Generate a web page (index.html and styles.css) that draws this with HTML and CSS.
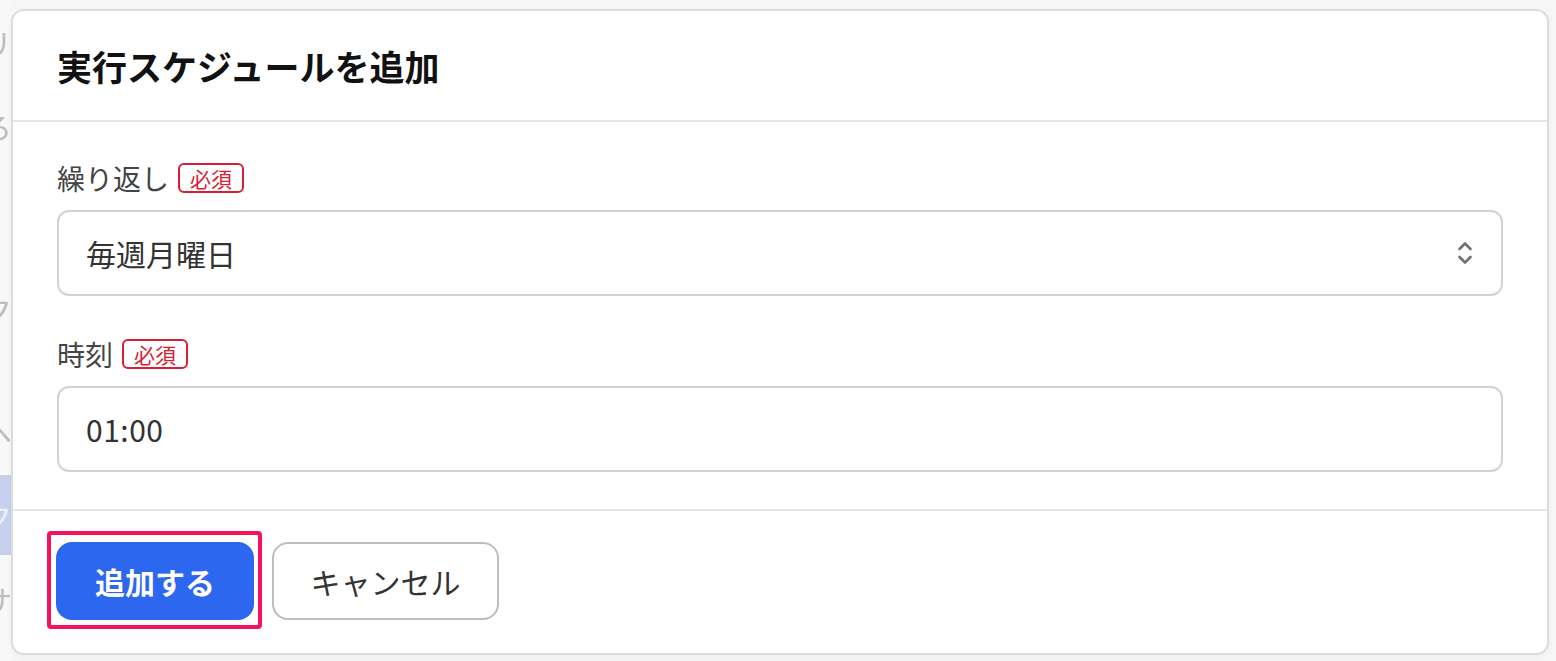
FILE: index.html
```html
<!DOCTYPE html>
<html lang="ja">
<head>
<meta charset="utf-8">
<title>実行スケジュールを追加</title>
<link rel="stylesheet" href="styles.css">
</head>
<body>
<div class="page">
  <aside class="behind">
    <div class="behind-item i1">リ</div>
    <div class="behind-item i2">ろ</div>
    <div class="behind-item i3">c</div>
    <div class="behind-item i4">ク</div>
    <div class="behind-item i5">ヘ</div>
    <div class="behind-item i6 active">ク</div>
    <div class="behind-item i7">サ</div>
  </aside>
  <div class="modal">
    <header class="modal-header">
      <h1 class="modal-title">実行スケジュールを追加</h1>
    </header>
    <div class="modal-body">
      <div class="field">
        <div class="label-row"><span class="label">繰り返し</span><span class="badge">必須</span></div>
        <div class="select">
          <span class="select-value">毎週月曜日</span>
          <svg class="chevrons" width="16" height="26" viewBox="0 0 16 26" aria-hidden="true">
            <path d="M2.5 9 L8 3.5 L13.5 9" fill="none" stroke="#707070" stroke-width="2.6" stroke-linecap="round" stroke-linejoin="round"/>
            <path d="M2.5 17 L8 22.5 L13.5 17" fill="none" stroke="#707070" stroke-width="2.6" stroke-linecap="round" stroke-linejoin="round"/>
          </svg>
        </div>
      </div>
      <div class="field">
        <div class="label-row"><span class="label">時刻</span><span class="badge">必須</span></div>
        <div class="input"><span class="input-value">01:00</span></div>
      </div>
    </div>
    <footer class="modal-footer">
      <button class="btn btn-primary highlighted">追加する</button>
      <button class="btn btn-secondary">キャンセル</button>
    </footer>
  </div>
</div>
</body>
</html>
```

FILE: styles.css
```css
* { box-sizing: border-box; }

html, body {
  margin: 0;
  padding: 0;
  height: 661px;
  overflow: hidden;
}

body {
  background: #f6f6f6;
  font-family: "Noto Sans CJK JP", "Noto Sans", sans-serif;
  color: #333;
}

.page {
  display: flex;
  height: 661px;
}

.behind {
  width: 11px;
  flex: none;
  overflow: hidden;
  display: flex;
  flex-direction: column;
  background: #f8f8f8;
}

.behind-item {
  font-size: 30px;
  line-height: 40px;
  color: #bdbdbd;
  white-space: nowrap;
  text-indent: -18px;
  height: 40px;
}

.behind-item.i1 { margin-top: 22px; }
.behind-item.i2 { margin-top: 44px; }
.behind-item.i3 { margin-top: 54px; }
.behind-item.i4 { margin-top: 48px; }
.behind-item.i5 { margin-top: 82px; }
.behind-item.i6 {
  margin-top: 25px;
  height: 80px;
  line-height: 80px;
  background: #c7d1ef;
  color: #eef1fb;
}
.behind-item.i7 { margin-top: 24px; }

.modal {
  flex: none;
  width: 1538px;
  height: 646px;
  margin-top: 9px;
  background: #fff;
  border: 2px solid #dcdcdc;
  border-radius: 13px;
  display: flex;
  flex-direction: column;
  box-shadow: 0 2px 6px rgba(0,0,0,0.04);
}

.modal-header {
  height: 111px;
  flex: none;
  padding: 0 44px;
  display: flex;
  align-items: center;
  border-bottom: 2px solid #e6e6e6;
}

.modal-title {
  margin: 0;
  font-size: 35px;
  font-weight: 700;
  color: #111;
  line-height: 1;
}

.modal-body {
  padding: 36px 44px 37px;
  display: flex;
  flex-direction: column;
  gap: 38px;
  border-bottom: 2px solid #e6e6e6;
}

.field {
  display: flex;
  flex-direction: column;
  gap: 12px;
}

.label-row {
  display: flex;
  align-items: center;
  gap: 9px;
  height: 40px;
}

.label {
  font-size: 28px;
  color: #444;
  line-height: 40px;
}

.badge {
  font-size: 21px;
  line-height: 26px;
  color: #d81e30;
  border: 2px solid #d81e30;
  border-radius: 6px;
  padding: 0 10px;
}

.select, .input {
  height: 86px;
  border: 2px solid #d5d1d1;
  border-radius: 12px;
  display: flex;
  align-items: center;
  padding: 0 27px;
  background: #fff;
}

.select {
  justify-content: space-between;
  padding-right: 28px;
}

.select-value, .input-value {
  font-size: 30px;
  color: #333;
}

.input-value { letter-spacing: 0.5px; }

.chevrons { display: block; }

.modal-footer {
  flex: 1;
  display: flex;
  align-items: flex-start;
  gap: 18px;
  padding: 31px 43px 0;
}

.btn {
  font-family: inherit;
  height: 78px;
  border-radius: 16px;
  font-size: 30px;
  padding: 0;
  cursor: pointer;
}

.btn-primary {
  width: 198px;
  background: #2d67ef;
  color: #fff;
  font-weight: 700;
  border: none;
}

.btn-secondary {
  width: 227px;
  background: #fff;
  color: #333;
  border: 2px solid #bdbdbd;
}

.highlighted {
  position: relative;
}

.highlighted::after {
  content: "";
  position: absolute;
  left: -9px;
  right: -8px;
  top: -11px;
  bottom: -9px;
  border: 4px solid #f5125a;
  border-radius: 4px;
  pointer-events: none;
}
```
